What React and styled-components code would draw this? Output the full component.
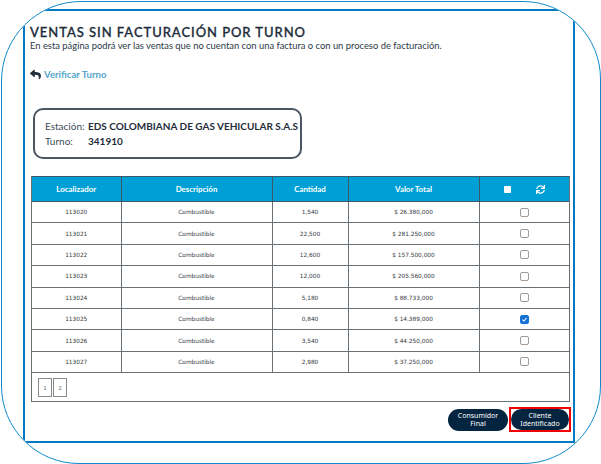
import React from "react";
import styled, { createGlobalStyle } from "styled-components";
import { FaReply, FaSync } from "react-icons/fa";

const rows = [
  ["113020", "1,540", "$ 26.380,000", false],
  ["113021", "22,500", "$ 281.250,000", false],
  ["113022", "12,600", "$ 157.500,000", false],
  ["113023", "12,000", "$ 205.560,000", false],
  ["113024", "5,180", "$ 88.733,000", false],
  ["113025", "0,840", "$ 14.389,000", true],
  ["113026", "3,540", "$ 44.250,000", false],
  ["113027", "2,980", "$ 37.250,000", false],
];

const GlobalStyle = createGlobalStyle`
  html, body {
    margin: 0;
    padding: 0;
    background: #ffffff;
  }
`;

const App = () => {
  return (
    <>
      <GlobalStyle />
      <Frame>
        <Panel>
          <Title>VENTAS SIN FACTURACIÓN POR TURNO</Title>
          <Intro>
            En esta página podrá ver las ventas que no cuentan con una factura o
            con un proceso de facturación.
          </Intro>
          <BackLink>
            <FaReply size={11} color="#22303c" />
            <span>Verificar Turno</span>
          </BackLink>
          <InfoBox>
            <InfoRow>
              <InfoLabel>Estación:</InfoLabel>
              <strong>EDS COLOMBIANA DE GAS VEHICULAR S.A.S</strong>
            </InfoRow>
            <InfoRow>
              <InfoLabel>Turno:</InfoLabel>
              <strong>341910</strong>
            </InfoRow>
          </InfoBox>
          <TableWrap>
            <Table>
              <colgroup>
                <col width="89" />
                <col width="151" />
                <col width="76" />
                <col width="131" />
                <col />
              </colgroup>
              <thead>
                <tr>
                  <Head>Localizador</Head>
                  <Head>Descripción</Head>
                  <Head>Cantidad</Head>
                  <Head>Valor Total</Head>
                  <Head>
                    <HeadTools>
                      <HeadBox />
                      <FaSync size={9} color="#ffffff" />
                    </HeadTools>
                  </Head>
                </tr>
              </thead>
              <tbody>
                {rows.map(([id, qty, total, checked]) => (
                  <tr key={id}>
                    <Cell>{id}</Cell>
                    <Cell>Combustible</Cell>
                    <Cell>{qty}</Cell>
                    <Cell>{total}</Cell>
                    <Cell>
                      <Check $checked={checked}>
                        {checked && (
                          <svg viewBox="0 0 10 10" width="9" height="9">
                            <path
                              d="M2.2 5.2 L4.2 7.2 L7.9 2.9"
                              fill="none"
                              stroke="#fff"
                              strokeWidth="1.5"
                            />
                          </svg>
                        )}
                      </Check>
                    </Cell>
                  </tr>
                ))}
              </tbody>
            </Table>
            <Pager>
              <PageBtn>1</PageBtn>
              <PageBtn>2</PageBtn>
            </Pager>
          </TableWrap>
          <Actions>
            <ActionBtn>
              Consumidor
              <br />
              Final
            </ActionBtn>
            <Marked>
              <ActionBtn>
                Cliente
                <br />
                Identificado
              </ActionBtn>
            </Marked>
          </Actions>
        </Panel>
      </Frame>
    </>
  );
};

const Frame = styled.div`
  box-sizing: border-box;
  width: 600px;
  height: 463px;
  margin: 1px 0 0 1px;
  padding: 7px 25px 20px 21px;
  border: 1px solid #0f8bcb;
  border-radius: 80px 78px 78px 78px;
  overflow: hidden;
  font-family: Lato, sans-serif;
  color: #1f2d3a;
`;

const Panel = styled.div`
  box-sizing: border-box;
  height: 100%;
  padding: 14px 3px 0 5px;
  border-style: solid;
  border-color: #0279c0;
  border-width: 2.5px;
`;

const Title = styled.h1`
  margin: 0;
  font-size: 13px;
  line-height: 15px;
  font-weight: 500;
  letter-spacing: 0.95px;
  -webkit-text-stroke: 0.3px #1d2c3a;
  color: #1d2c3a;
`;

const Intro = styled.p`
  margin: 0;
  font-size: 9.4px;
  line-height: 12px;
  color: #2b3946;
`;

const BackLink = styled.div`
  display: flex;
  align-items: center;
  gap: 3px;
  margin-top: 15px;
  height: 14px;
  font-size: 9.6px;
  font-weight: 700;
  color: #54a6cc;
`;

const InfoBox = styled.div`
  box-sizing: border-box;
  width: 269px;
  height: 51px;
  margin: 27px 0 0 3px;
  padding: 9px 0 0 10px;
  border: 2px solid #4a5763;
  border-radius: 10px;
  font-size: 10px;
  line-height: 15px;
  white-space: nowrap;
  color: #3c4a56;

  strong {
    color: #1f2d3a;
    font-weight: 700;
  }
`;

const InfoRow = styled.div`
  display: flex;
`;

const InfoLabel = styled.span`
  width: 43px;
`;

const TableWrap = styled.div`
  box-sizing: border-box;
  width: 539px;
  height: 226px;
  margin: 17px 0 0 1px;
  border: 1px solid #6a7176;
  border-top: 0;
`;

const Table = styled.table`
  width: 100%;
  border-collapse: collapse;
  table-layout: fixed;
`;

const Head = styled.th`
  height: 24px;
  padding: 0;
  background: #00a0d6;
  border: 1px solid #3d5668;
  color: #ffffff;
  font-size: 7.9px;
  font-weight: 700;
  text-align: center;

  &:first-child {
    border-left: 0;
  }
  &:last-child {
    border-right: 0;
  }
`;

const HeadTools = styled.div`
  display: flex;
  align-items: center;
  justify-content: center;
  gap: 25px;
`;

const HeadBox = styled.span`
  display: block;
  width: 7px;
  height: 7px;
  border-radius: 1px;
  background: #ffffff;
`;

const Cell = styled.td`
  height: 20.4px;
  padding: 0;
  border: 1px solid #6a7176;
  text-align: center;
  font-family: "DejaVu Sans", sans-serif;
  font-size: 5.8px;
  color: #33393e;

  &:first-child {
    border-left: 0;
  }
  &:last-child {
    border-right: 0;
  }
`;

const Check = styled.span`
  box-sizing: border-box;
  display: inline-flex;
  align-items: center;
  justify-content: center;
  vertical-align: middle;
  width: 9px;
  height: 9px;
  border-radius: 2px;
  border: 1px solid ${(p) => (p.$checked ? "#1573d6" : "#a09c98")};
  background: ${(p) => (p.$checked ? "#1573d6" : "#ffffff")};
`;

const Pager = styled.div`
  display: flex;
  gap: 1px;
  padding: 5px 0 0 6px;
`;

const PageBtn = styled.div`
  box-sizing: border-box;
  width: 14px;
  height: 19px;
  display: flex;
  align-items: center;
  justify-content: center;
  border: 1px solid #8a8a8a;
  font-family: "DejaVu Sans", sans-serif;
  font-size: 5.5px;
  color: #59707f;
`;

const Actions = styled.div`
  display: flex;
  justify-content: flex-end;
  align-items: center;
  gap: 1px;
  width: 539px;
  margin: 5px 0 0 1px;
`;

const ActionBtn = styled.div`
  box-sizing: border-box;
  width: 60px;
  height: 22px;
  display: flex;
  align-items: center;
  justify-content: center;
  text-align: center;
  border-radius: 11px;
  background: #04243f;
  color: #ffffff;
  font-family: "Noto Sans", sans-serif;
  font-size: 7px;
  line-height: 8px;
`;

const Marked = styled.div`
  border: 2px solid #f00000;
  margin-right: -1px;

  ${ActionBtn} {
    width: 58px;
    height: 21px;
  }
`;

export default App;
